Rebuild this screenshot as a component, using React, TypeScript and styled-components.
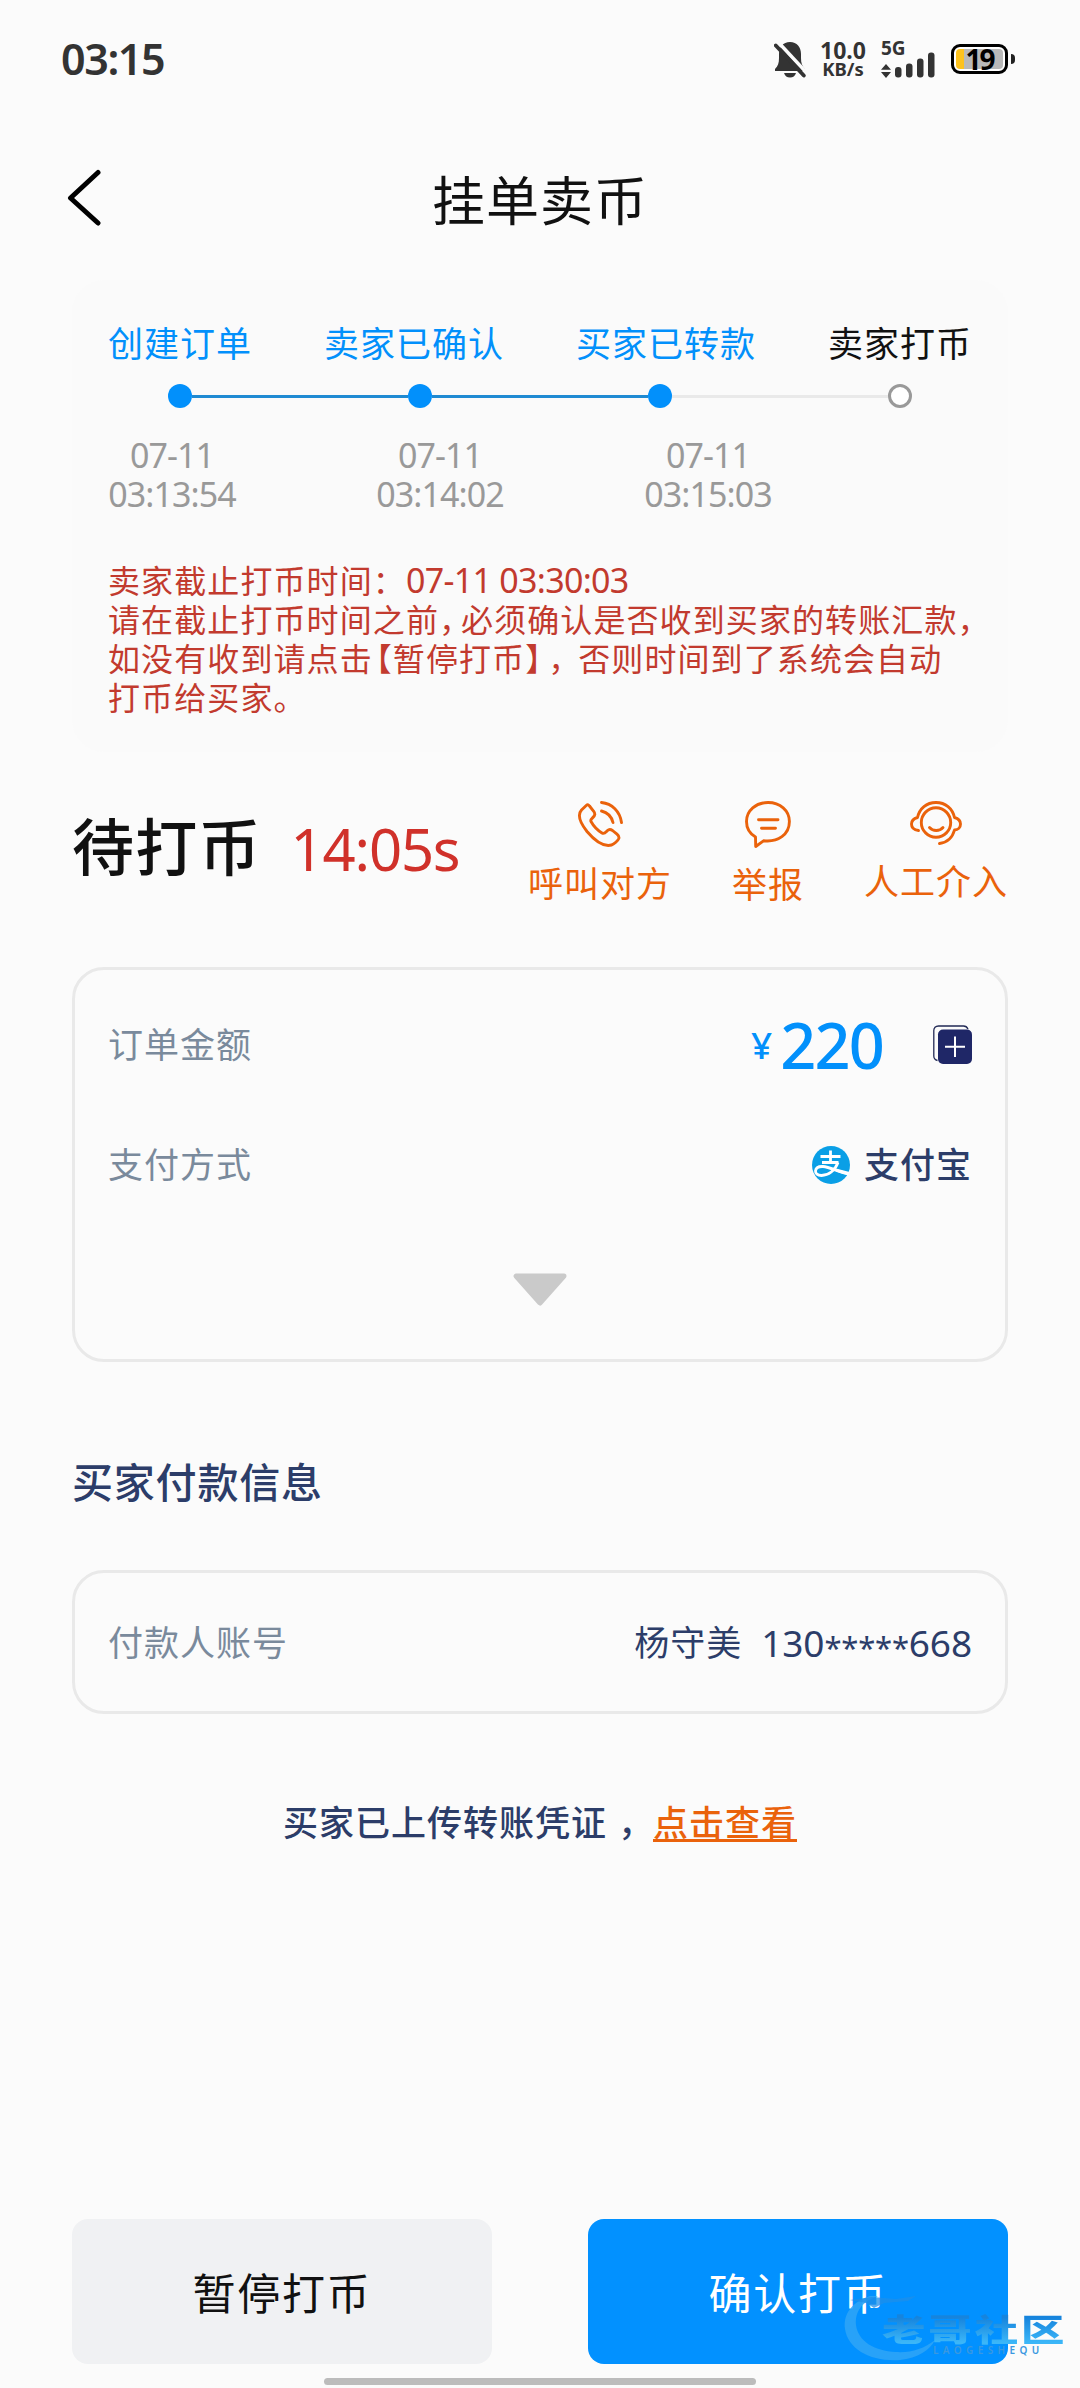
import React from 'react';
import styled, { createGlobalStyle } from 'styled-components';

const fontStack = '"Noto Sans", "Noto Sans CJK SC", sans-serif';
const blue = '#0290fb';
const navy = '#2c3d69';
const orange = '#ea620b';

const GlobalStyle = createGlobalStyle`
  * { box-sizing: border-box; }
  html, body { margin: 0; padding: 0; background: #fbfbfb; }
  body { font-family: ${fontStack}; color: #111; }
  svg { display: block; flex: none; }
`;

const Page = styled.main`
  position: relative;
  display: flex;
  flex-direction: column;
  width: 1080px;
  height: 2388px;
  overflow: hidden;
  background: #fbfbfb;
  white-space: nowrap;
`;

const StatusBar = styled.header`
  display: flex;
  align-items: center;
  justify-content: space-between;
  height: 118px;
  padding: 0 65px 0 61px;
`;

const Clock = styled.time`
  font-size: 43px;
  font-weight: 600;
  line-height: 60px;
  letter-spacing: -1.4px;
  color: #333;
`;

const StatusIcons = styled.div`
  display: flex;
  align-items: center;
  color: #333;
`;

const NetSpeed = styled.div`
  display: flex;
  flex-direction: column;
  align-items: center;
  width: 46px;
  margin: 0 15px 0 14px;
  font-weight: 700;
  line-height: 18px;
`;

const SpeedValue = styled.span`
  font-size: 23px;
  line-height: 19px;
`;

const SpeedUnit = styled.span`
  font-size: 18.5px;
`;

const Signal = styled.div`
  position: relative;
  width: 54px;
  height: 38px;
  margin-right: 16px;
`;

const NetType = styled.span`
  position: absolute;
  left: 0;
  top: -1px;
  font-size: 19px;
  font-weight: 700;
  line-height: 18px;
`;

const Battery = styled.div`
  display: flex;
  align-items: center;
`;

const BatteryBody = styled.div`
  display: flex;
  align-items: center;
  justify-content: center;
  width: 57px;
  height: 30px;
  border: 3px solid #000;
  border-radius: 9px;
  padding: 2px;
  background: linear-gradient(90deg, #fdc21d 0 16%, #b9b9b9 16%) content-box, #fff;
  color: #000;
  font-size: 28px;
  font-weight: 700;
  line-height: 24px;
  letter-spacing: -2px;
`;

const BatteryTip = styled.i`
  width: 4px;
  height: 10px;
  margin-left: 3px;
  border-radius: 0 4px 4px 0;
  background: #222;
`;

const NavBar = styled.nav`
  display: grid;
  grid-template-columns: 64px 1fr 64px;
  align-items: center;
  height: 162px;
  padding: 0 66px 0 66px;
`;

const Title = styled.h1`
  margin: 0;
  padding-top: 4px;
  text-align: center;
  font-size: 53px;
  letter-spacing: 1px;
  font-weight: 400;
  line-height: 80px;
`;

const ProgressCard = styled.section`
  height: 472px;
  margin: 0 72px;
  padding: 41px 36px 0;
  border-radius: 32px;
  background: #fafafa;
`;

const StepLabels = styled.div`
  display: flex;
  justify-content: space-between;
  height: 46px;
`;

const StepLabel = styled.span<{ $done: boolean }>`
  font-size: 35px;
  letter-spacing: 1px;
  line-height: 46px;
  color: ${(p) => (p.$done ? blue : '#111')};
`;

const Track = styled.div`
  display: flex;
  align-items: center;
  height: 24px;
  margin: 17px 60px 0;
`;

const Dot = styled.i<{ $done: boolean }>`
  flex: none;
  width: 24px;
  height: 24px;
  border-radius: 50%;
  border: ${(p) => (p.$done ? 'none' : '3px solid #999')};
  background: ${(p) => (p.$done ? blue : '#fff')};
`;

const Segment = styled.i<{ $done: boolean }>`
  flex: 1;
  height: 3px;
  background: ${(p) => (p.$done ? '#1f8ad2' : '#e9e9e9')};
`;

const StepTimes = styled.div`
  display: flex;
  gap: 140px;
  margin-top: 28px;
`;

const StepTime = styled.div`
  width: 128px;
  text-align: center;
  white-space: pre-line;
  font-size: 34px;
  line-height: 39px;
  letter-spacing: -0.9px;
  color: #999;
`;

const Notice = styled.div`
  margin-top: 47px;
  font-size: 32px;
  letter-spacing: 1.1px;
  line-height: 39px;
  color: #c23a2e;
`;

const NoticeLine = styled.div`
  height: 39px;
`;

const NoticeDate = styled.span`
  font-size: 34px;
  letter-spacing: -0.7px;
`;

const Mark = styled.span<{ $width: number; $indent?: number }>`
  display: inline-block;
  width: ${(p) => p.$width}px;
  text-indent: ${(p) => p.$indent ?? 0}px;
  letter-spacing: 0;
`;

const Summary = styled.section`
  display: flex;
  justify-content: space-between;
  height: 215px;
  padding: 0 72px;
`;

const StateGroup = styled.div`
  display: flex;
  align-items: baseline;
  gap: 29px;
  padding-top: 53px;
`;

const StateName = styled.h2`
  margin: 0;
  font-size: 62px;
  font-weight: 500;
  line-height: 84px;
  letter-spacing: 1.2px;
`;

const Countdown = styled.span`
  font-size: 58px;
  line-height: 84px;
  letter-spacing: -1.2px;
  color: #d0312a;
`;

const Actions = styled.div`
  display: flex;
  align-items: flex-start;
  gap: 60px;
  padding-top: 49px;
`;

const Action = styled.button<{ $gap: number }>`
  display: flex;
  flex-direction: column;
  align-items: center;
  gap: ${(p) => p.$gap}px;
  padding: 0;
  border: 0;
  background: none;
  color: ${orange};
  font-family: inherit;
  font-size: 35px;
  letter-spacing: 1px;
  font-weight: 400;
  line-height: 46px;
`;

const Card = styled.section<{ $height: number }>`
  flex: none;
  height: ${(p) => p.$height}px;
  margin: 0 72px;
  padding: 0 33px;
  border: 3px solid #e9e9e9;
  border-radius: 32px;
`;

const Row = styled.div<{ $height: number }>`
  display: flex;
  align-items: center;
  justify-content: space-between;
  height: ${(p) => p.$height}px;
`;

const FieldName = styled.span`
  font-size: 35px;
  letter-spacing: 1px;
  line-height: 46px;
  color: #7a8a9c;
`;

const FieldValue = styled.span`
  display: flex;
  align-items: center;
  font-size: 35px;
  letter-spacing: 1px;
  line-height: 46px;
  color: ${navy};
`;

const Currency = styled.span`
  margin-right: 7px;
  font-size: 37px;
  font-weight: 500;
  color: ${blue};
`;

const Amount = styled.span`
  margin-right: 50px;
  font-size: 63px;
  font-weight: 500;
  line-height: 80px;
  letter-spacing: -1.8px;
  color: ${blue};
`;

const PayName = styled.span`
  margin-left: 14px;
  font-weight: 500;
`;

const Expand = styled.div`
  display: flex;
  justify-content: center;
  padding-top: 63px;
`;

const SectionTitle = styled.h3`
  margin: 88px 72px 56px;
  font-size: 41px;
  letter-spacing: 0.8px;
  font-weight: 500;
  line-height: 64px;
  color: ${navy};
`;

const AccountNo = styled.span`
  display: flex;
  align-items: center;
  margin-left: 19px;
  font-size: 37px;
  letter-spacing: -0.1px;
`;

const Stars = styled.span`
  padding-top: 8px;
  font-size: 31px;
  letter-spacing: -0.2px;
`;

const Voucher = styled.p`
  display: flex;
  justify-content: center;
  margin: 86px 0 0;
  font-size: 35px;
  letter-spacing: 1px;
  font-weight: 500;
  line-height: 46px;
  color: ${navy};
`;

const VoucherLink = styled.a`
  color: ${orange};
  height: 42px;
  border-bottom: 3px solid ${orange};
`;

const Footer = styled.footer`
  display: flex;
  justify-content: space-between;
  margin-top: auto;
  padding: 0 72px;
`;

const Button = styled.button<{ $primary?: boolean }>`
  width: 420px;
  height: 145px;
  border: 0;
  border-radius: 16px;
  font-family: inherit;
  font-size: 43px;
  letter-spacing: 1.7px;
  background: ${(p) => (p.$primary ? '#0291ff' : '#f0f1f3')};
  color: ${(p) => (p.$primary ? '#fff' : '#111')};
`;

const HomeBar = styled.div`
  flex: none;
  width: 432px;
  height: 7px;
  margin: 14px auto 3px;
  border-radius: 4px;
  background: #bcbcbc;
`;

const Watermark = styled.div`
  position: absolute;
  left: 838px;
  top: 2292px;
  width: 232px;
  height: 72px;
`;

const WatermarkName = styled.span`
  position: absolute;
  left: 44px;
  top: 18px;
  font-size: 31px;
  font-weight: 900;
  line-height: 38px;
  letter-spacing: 2.1px;
  transform: scaleX(1.4);
  transform-origin: 0 0;
  color: transparent;
  background: linear-gradient(#1684dd 20%, #3bb6f8 85%);
  background-clip: text;
`;

const WatermarkLatin = styled.span`
  position: absolute;
  left: 95px;
  top: 51px;
  font-size: 10px;
  font-weight: 600;
  line-height: 14px;
  letter-spacing: 4.4px;
  color: #3a98e0;
`;

const BellOff = () => (
  <svg width="32" height="38" viewBox="0 0 32 38">
    <path
      d="M1 31V29C4 26 5 23 5 18V14C5 7 9 2 16 2S27 7 27 14V18C27 23 28 26 31 29V31Z"
      fill="#333"
    />
    <path d="M10 33H22C21 36 19 37.500 16 37.500S11 36 10 33Z" fill="#333" />
    <path d="M4.500 2.500L32.500 32.500" stroke="#fbfbfb" strokeWidth="3.500" />
    <path d="M1.800 5.500L29.800 35.500" stroke="#333" strokeWidth="3.800" strokeLinecap="round" />
  </svg>
);

const SignalBars = () => (
  <svg width="54" height="38" viewBox="0 0 54 38" fill="#333">
    <path d="M5 24L10 29.800H0ZM5 38L10 32H0Z" />
    <rect x="14" y="27" width="6.500" height="10.500" rx="3" />
    <rect x="25" y="23.500" width="6.500" height="14" rx="3" />
    <rect x="36" y="18.500" width="6.500" height="19" rx="3" />
    <rect x="47" y="12.500" width="6.500" height="25" rx="3" />
  </svg>
);

const BackIcon = () => (
  <svg width="38" height="60" viewBox="0 0 38 60" fill="none">
    <path
      d="M32 3.500L4.500 29L32 54"
      stroke="#000"
      strokeWidth="5"
      strokeLinecap="round"
      strokeLinejoin="round"
    />
  </svg>
);

const lineProps = {
  fill: 'none',
  stroke: orange,
  strokeWidth: 2.9,
  strokeLinecap: 'round' as const,
  strokeLinejoin: 'round' as const,
};

const PhoneIcon = () => (
  <svg width="46" height="46" viewBox="0 0 46 46" {...lineProps}>
    <path d="M9.500 4.200L4.500 9C.500 13.500 2.500 21 10 30.500C18 40 27 46 34.500 44C37 43.300 41 39.500 41.800 37.500C42.500 35.500 41.500 34.500 40 33.200L35.500 29.500C33.500 28 32 28 30.500 29.500C28.500 31.500 27.500 33.500 25 32C20 29 16.500 25 14 20.500C12.500 18 17.500 16.500 17.800 13.500C18 12 17.200 11 16.300 9.800L12.500 5C11.700 3.800 10.600 3.200 9.500 4.200Z" />
    <path d="M24.500 1.500C35 2.500 43 10.500 44.500 21.500" />
    <path d="M24.500 10C30.500 11.500 34.500 15.500 36 21.500" />
  </svg>
);

const ChatIcon = () => (
  <svg width="46" height="48" viewBox="0 0 46 48" {...lineProps}>
    <path d="M10.500 36L10.700 45.500L18.500 39.800C33 41.500 44.400 33.500 44.400 20.500C44.400 9.500 35 1.500 23 1.500S1.500 9.500 1.500 20.500C1.500 27 4.500 32.500 10.500 36Z" />
    <path d="M13.500 18.800H33M16.500 27.300H30.500" />
  </svg>
);

const HeadsetIcon = () => (
  <svg width="52" height="44" viewBox="0 0 52 44" {...lineProps}>
    <circle cx="26" cy="21.500" r="14.700" />
    <path d="M8.500 29.500C4 29 1.500 26.500 1.500 23C1.500 19.500 4 17.500 7.500 16.500C9.500 7.500 16.500 1.500 26 1.500S42.500 7.500 44.500 16.500C48 17.500 50.500 19.500 50.500 23C50.500 26.500 48 29 44.500 29C42.500 36.500 37 41.500 29.500 42.500" />
    <path d="M19.500 26.500C23 30.500 29.500 30.500 33 26.500" />
  </svg>
);

const AddCopyIcon = () => (
  <svg width="39" height="40" viewBox="0 0 39 40" fill="none">
    <path
      d="M35 4C34 1.800 32.500 1 30.500 1H5.500C2.500 1 .800 3 .800 5.500V31C.800 33.500 2.500 35 4.500 35.500"
      stroke="#222a55"
      strokeWidth="1.300"
    />
    <rect x="5" y="4.500" width="34" height="34.500" rx="5" fill="#1f2767" />
    <path d="M12 21.700H32M22 11.500V32" stroke="#fff" strokeWidth="2" />
  </svg>
);

const AlipayIcon = () => (
  <svg width="38" height="38" viewBox="0 0 38 38" fill="none">
    <circle cx="19" cy="19" r="19" fill="#0a9fe6" />
    <path d="M8.500 10.500H28.500M18.500 4.500V16M10 16.500H26.500" stroke="#fff" strokeWidth="2.800" />
    <path
      d="M26 16.500C23 24.500 16.500 29.500 9.500 29.500C5.500 29.500 3.300 27.500 3.500 24.800C3.800 21.800 7 20.300 11 20.500C18 21 26.500 26 37 28"
      stroke="#fff"
      strokeWidth="2.800"
    />
    <path d="M24 22.500L37.500 26L36.500 29.500L24 25.500Z" fill="#fff" />
  </svg>
);

const Caret = () => (
  <svg width="56" height="34" viewBox="0 0 56 34">
    <path d="M4 3H52L28 30Z" fill="#cacaca" stroke="#cacaca" strokeWidth="5" strokeLinejoin="round" />
  </svg>
);

const Swoosh = () => (
  <svg width="110" height="72" viewBox="0 0 110 72" fill="none">
    <path
      d="M32 4C14 10 5 22 7 37C10 58 34 70 62 68C80 66 92 58 97 48C86 57 72 61 58 60C36 59 20 49 18 33C17 20 23 10 40 4Z"
      fill="#2fa4f7"
      opacity=".85"
    />
    <path d="M12 8L34 5L58 7L78 4L70 9L46 11L36 16L28 11Z" fill="#1d8fe9" opacity=".75" />
  </svg>
);

const steps = [
  { label: '创建订单', done: true, time: '07-11\n03:13:54' },
  { label: '卖家已确认', done: true, time: '07-11\n03:14:02' },
  { label: '买家已转款', done: true, time: '07-11\n03:15:03' },
  { label: '卖家打币', done: false, time: '' },
];

const actions = [
  { label: '呼叫对方', icon: <PhoneIcon />, gap: 14 },
  { label: '举报', icon: <ChatIcon />, gap: 13 },
  { label: '人工介入', icon: <HeadsetIcon />, gap: 14 },
];

export default function App() {
  return (
    <>
      <GlobalStyle />
      <Page>
        <StatusBar>
          <Clock>03:15</Clock>
          <StatusIcons>
            <BellOff />
            <NetSpeed>
              <SpeedValue>10.0</SpeedValue>
              <SpeedUnit>KB/s</SpeedUnit>
            </NetSpeed>
            <Signal>
              <NetType>5G</NetType>
              <SignalBars />
            </Signal>
            <Battery>
              <BatteryBody>19</BatteryBody>
              <BatteryTip />
            </Battery>
          </StatusIcons>
        </StatusBar>

        <NavBar>
          <BackIcon />
          <Title>挂单卖币</Title>
        </NavBar>

        <ProgressCard>
          <StepLabels>
            {steps.map((s) => (
              <StepLabel key={s.label} $done={s.done}>
                {s.label}
              </StepLabel>
            ))}
          </StepLabels>
          <Track>
            {steps.map((s, i) => (
              <React.Fragment key={s.label}>
                {i > 0 && <Segment $done={s.done} />}
                <Dot $done={s.done} />
              </React.Fragment>
            ))}
          </Track>
          <StepTimes>
            {steps
              .filter((s) => s.time)
              .map((s) => (
                <StepTime key={s.label}>{s.time}</StepTime>
              ))}
          </StepTimes>
          <Notice>
            <NoticeLine>
              卖家截止打币时间：<NoticeDate>07-11 03:30:03</NoticeDate>
            </NoticeLine>
            <NoticeLine>
              请在截止打币时间之前<Mark $width={22}>，</Mark>必须确认是否收到买家的转账汇款
              <Mark $width={22}>，</Mark>
            </NoticeLine>
            <NoticeLine>
              如没有收到请点击<Mark $width={20} $indent={-13}>【</Mark>暂停打币
              <Mark $width={23}>】</Mark>
              <Mark $width={30}>，</Mark>否则时间到了系统会自动
            </NoticeLine>
            <NoticeLine>打币给买家。</NoticeLine>
          </Notice>
        </ProgressCard>

        <Summary>
          <StateGroup>
            <StateName>待打币</StateName>
            <Countdown>14:05s</Countdown>
          </StateGroup>
          <Actions>
            {actions.map((a) => (
              <Action key={a.label} $gap={a.gap}>
                {a.icon}
                {a.label}
              </Action>
            ))}
          </Actions>
        </Summary>

        <Card $height={395}>
          <Row $height={150}>
            <FieldName>订单金额</FieldName>
            <FieldValue>
              <Currency>¥</Currency>
              <Amount>220</Amount>
              <AddCopyIcon />
            </FieldValue>
          </Row>
          <Row $height={90}>
            <FieldName>支付方式</FieldName>
            <FieldValue>
              <AlipayIcon />
              <PayName>支付宝</PayName>
            </FieldValue>
          </Row>
          <Expand>
            <Caret />
          </Expand>
        </Card>

        <SectionTitle>买家付款信息</SectionTitle>

        <Card $height={144}>
          <Row $height={140}>
            <FieldName>付款人账号</FieldName>
            <FieldValue>
              杨守美
              <AccountNo>
                130<Stars>*****</Stars>668
              </AccountNo>
            </FieldValue>
          </Row>
        </Card>

        <Voucher>
          买家已上传转账凭证<Mark $width={46} $indent={11}>，</Mark>
          <VoucherLink>点击查看</VoucherLink>
        </Voucher>

        <Footer>
          <Button>暂停打币</Button>
          <Button $primary>确认打币</Button>
        </Footer>
        <HomeBar />

        <Watermark>
          <Swoosh />
          <WatermarkName>老哥社区</WatermarkName>
          <WatermarkLatin>LAOGESHEQU</WatermarkLatin>
        </Watermark>
      </Page>
    </>
  );
}
